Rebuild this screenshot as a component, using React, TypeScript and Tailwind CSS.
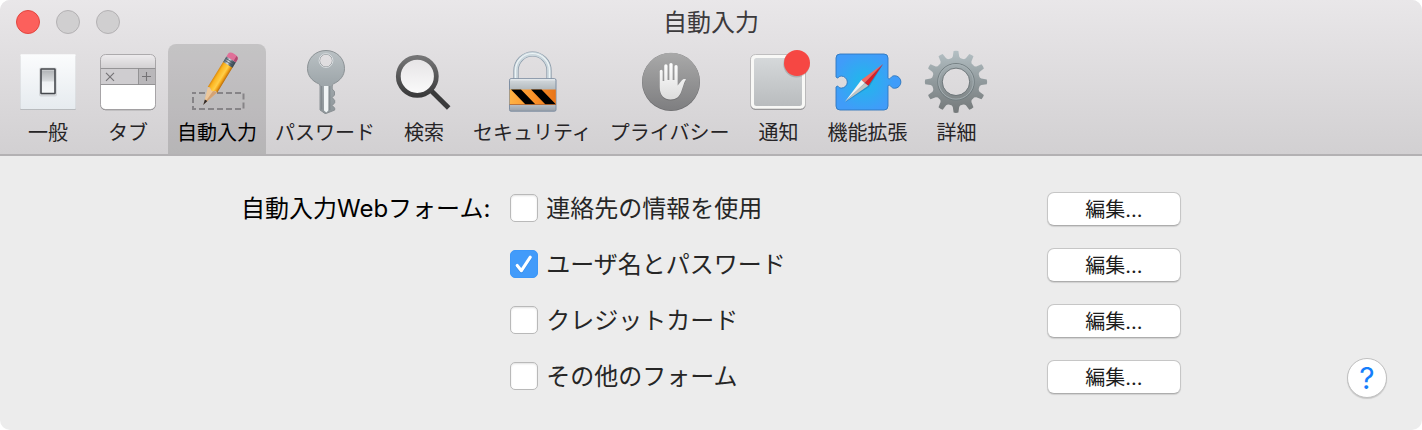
import { useState, type ReactNode } from "react";

const iconClass = "-mx-px size-16 overflow-visible";

function GeneralIcon() {
  return (
    <svg viewBox="0 0 64 64" className={iconClass} aria-hidden="true">
      <defs>
        <linearGradient id="gen-plate" x2="0" y2="1">
          <stop offset="0" stopColor="#fbfcfd" />
          <stop offset="1" stopColor="#e6ebef" />
        </linearGradient>
        <linearGradient id="gen-switch" x2="0" y2="1">
          <stop offset="0" stopColor="#e2e4e6" />
          <stop offset=".1" stopColor="#b5b8bb" />
          <stop offset=".5" stopColor="#d9dcde" />
          <stop offset=".52" stopColor="#eef1f3" />
          <stop offset="1" stopColor="#f6f8f9" />
        </linearGradient>
      </defs>
      <rect x="4.300" y="5" width="55.400" height="55" rx="1" fill="#a9abae" />
      <rect x="4.300" y="4.300" width="55.400" height="55" rx="1" fill="url(#gen-plate)" />
      <rect x="23" y="17.500" width="18" height="29" rx="2" fill="#000" opacity=".1" />
      <rect x="25" y="19" width="14" height="24.500" rx=".5" fill="url(#gen-switch)" stroke="#46494e" strokeWidth="1.600" />
    </svg>
  );
}

function TabsIcon() {
  return (
    <svg viewBox="0 0 64 64" className={iconClass} aria-hidden="true">
      <defs>
        <linearGradient id="tab-top" x2="0" y2="1">
          <stop offset="0" stopColor="#efedef" />
          <stop offset="1" stopColor="#d3d1d3" />
        </linearGradient>
        <clipPath id="tab-clip">
          <rect x="4.500" y="4.500" width="55" height="55" rx="5" />
        </clipPath>
      </defs>
      <rect x="4.500" y="5" width="55" height="55.300" rx="5" fill="#7d7b7e" />
      <g clipPath="url(#tab-clip)">
        <rect x="4" y="4" width="56" height="56" fill="#fff" />
        <rect x="4" y="4" width="56" height="14" fill="url(#tab-top)" />
        <rect x="4" y="18" width="56" height="17" fill="#cfcdd0" />
        <rect x="42" y="18" width="18" height="17" fill="#b9b7ba" />
        <path d="M4 18.500h56M4 34.500h56M42.500 18v17" stroke="#8f8d90" strokeWidth=".9" fill="none" />
      </g>
      <rect x="4.500" y="4.500" width="55" height="55" rx="5" fill="none" stroke="#9a989b" strokeWidth=".8" />
      <path d="M10 22.800l8 8M18 22.800l-8 8M46 26.500h9M50.500 22v9" stroke="#747275" strokeWidth="1.100" fill="none" />
    </svg>
  );
}

function PencilIcon() {
  return (
    <svg viewBox="0 0 64 64" className={iconClass} aria-hidden="true">
      <defs>
        <linearGradient id="pen-body">
          <stop offset="0" stopColor="#d9880f" />
          <stop offset=".2" stopColor="#fbb521" />
          <stop offset=".6" stopColor="#ffcf4a" />
          <stop offset=".78" stopColor="#f5a81b" />
          <stop offset="1" stopColor="#b96a08" />
        </linearGradient>
        <linearGradient id="pen-metal">
          <stop offset="0" stopColor="#4b5b67" />
          <stop offset=".4" stopColor="#d5dde2" />
          <stop offset=".65" stopColor="#5e6e7a" />
          <stop offset="1" stopColor="#36444e" />
        </linearGradient>
      </defs>
      <rect x="8" y="43" width="50.500" height="16" fill="none" stroke="#868487" strokeWidth="2" strokeDasharray="6 3" strokeDashoffset="3" />
      <g transform="translate(18.500 54.500) rotate(31.500) scale(1.150 1)">
        <path d="M-4.600-17L0 0l4.600-17z" fill="#ecc79b" />
        <path d="M1-17L0 0l4.600-17z" fill="#d3a274" />
        <path d="M-1.300-5L0 0.500l1.300-5.500z" fill="#2f2a2b" />
        <path d="M-4.800-47h9.600v30q-1.600-2-3 0-1.700 2.200-3.500 0-1.600-2-3.100 0z" fill="url(#pen-body)" />
        <path d="M-4.800-53h9.600v6.500h-9.600z" fill="url(#pen-metal)" />
        <path d="M-4.800-51h9.600M-4.800-48.700h9.600" stroke="#3c4a55" strokeWidth=".6" />
        <path d="M-4.800-53v-3q0-3.200 4.800-3.200t4.800 3.200v3z" fill="#df7098" />
        <path d="M2.500-53v-5.600q2.300.5 2.300 2.600v3z" fill="#b04a70" />
      </g>
    </svg>
  );
}

function KeyIcon() {
  return (
    <svg viewBox="0 0 64 64" className={iconClass} aria-hidden="true">
      <defs>
        <linearGradient id="key-head" x2="0" y2="1">
          <stop offset="0" stopColor="#bac1c4" />
          <stop offset=".5" stopColor="#a0a8ac" />
          <stop offset="1" stopColor="#8f969a" />
        </linearGradient>
      </defs>
      <path
        fillRule="evenodd"
        d="M33 .5c10.800 0 18.500 8 18.500 18 0 7-4.300 12.300-11 15.300q-1.300.7-1.300 2.200V39l2.300 2.500v3.500l-2.300 2.500 2.500 3v2.300l-2.500 2.700 2.500 2.600v2l-8.700 3.400h-1L27 60V36q0-1.500-1.300-2.200C18.800 30.800 14.500 25.500 14.500 18.500c0-10 7.700-18 18.500-18zm0 3.700a6.400 6.400 0 100 12.800 6.400 6.400 0 000-12.800z"
        fill="url(#key-head)"
        stroke="#848b8f"
        strokeWidth=".9"
      />
      <path d="M28.700 36v23.500M36.800 36v24" stroke="#7e868a" strokeWidth="1" />
      <path d="M31 36h4.300v24.500l-2 2-2.300-2z" fill="#f0f4f5" />
      <circle cx="33" cy="10.600" r="6.900" fill="none" stroke="#e7ebed" strokeWidth=".8" />
    </svg>
  );
}

function SearchIcon() {
  return (
    <svg viewBox="0 0 64 64" className={iconClass} aria-hidden="true">
      <defs>
        <linearGradient id="lens" x2="0" y2="1">
          <stop offset="0" stopColor="#e6e4e6" />
          <stop offset="1" stopColor="#fafafa" />
        </linearGradient>
        <linearGradient id="rim" x2="0" y2="1">
          <stop offset="0" stopColor="#747475" />
          <stop offset="1" stopColor="#3a3a3b" />
        </linearGradient>
      </defs>
      <path d="M38.500 40L56.700 58" stroke="#3a3a3b" strokeWidth="5" />
      <circle cx="25.300" cy="26.300" r="17" fill="url(#lens)" />
      <circle cx="25.300" cy="26.300" r="19" fill="none" stroke="url(#rim)" strokeWidth="4.800" />
    </svg>
  );
}

function LockIcon() {
  return (
    <svg viewBox="0 0 64 64" className={iconClass} aria-hidden="true">
      <defs>
        <linearGradient id="lock-body" x2="0" y2="1">
          <stop offset="0" stopColor="#d5dbdf" />
          <stop offset=".33" stopColor="#b3babe" />
          <stop offset=".8" stopColor="#b9bfc5" />
          <stop offset="1" stopColor="#989fa8" />
        </linearGradient>
        <linearGradient id="lock-band">
          <stop offset="0" stopColor="#ffb244" />
          <stop offset=".5" stopColor="#fc932a" />
          <stop offset="1" stopColor="#e8751a" />
        </linearGradient>
      </defs>
      <path d="M16 30V20.500a16.500 16.500 0 0133 0V30" fill="none" stroke="#8797a6" strokeWidth="5.200" />
      <path d="M16 30V20.500a16.500 16.500 0 0133 0V30" fill="none" stroke="#ccd8de" strokeWidth="3.800" />
      <path d="M15.500 28V20.500a17 17 0 0134 0V28" fill="none" stroke="#edf4f6" strokeWidth="1.200" />
      <rect x="9.500" y="28.700" width="46.500" height="32.500" rx="1.500" fill="url(#lock-body)" stroke="#7f8fa3" />
      <path d="M10.500 29.800h44.500" stroke="#eef2f4" />
      <rect x="9.700" y="39.500" width="46.100" height="15" fill="url(#lock-band)" />
      <path d="M11 39.500h10l14.500 15h-10zM31 39.500h10.500l14.300 14.700v.3H45.500z" fill="#000" />
      <path d="M9.700 54.500h46.100" stroke="#b3622a" strokeWidth=".8" />
    </svg>
  );
}

const handPath =
  "M21.700 37V21.300a1.500 1.500 0 013 0V31h1.500V15.900a1.700 1.700 0 013.400 0V30h1.700V14.600a1.700 1.700 0 013.400 0V30h1.700V16.700a1.600 1.600 0 013.300 0V35.500l4-5c1-1.500 3-2 4.500-1-1.200 1.300-1.900 3-2.700 5.500l-2.200 6.500c-1.700 5-5 8-10.700 8-6.300 0-10.900-4-10.900-12.500z";

function PrivacyIcon() {
  return (
    <svg viewBox="0 0 64 64" className={iconClass} aria-hidden="true">
      <defs>
        <linearGradient id="disc" x2="0" y2="1">
          <stop offset="0" stopColor="#a9a9a9" />
          <stop offset="1" stopColor="#7e7e80" />
        </linearGradient>
        <linearGradient id="hand" x2="0" y2="1">
          <stop offset="0" stopColor="#fff" />
          <stop offset="1" stopColor="#dcdcdc" />
        </linearGradient>
      </defs>
      <circle cx="33" cy="31.900" r="29" fill="#6d6d6f" />
      <circle cx="33" cy="31.500" r="28.700" fill="url(#disc)" />
      <path d={handPath} fill="#5d5d5f" opacity=".5" transform="translate(0 1)" />
      <path d={handPath} fill="url(#hand)" />
    </svg>
  );
}

function NotificationIcon() {
  return (
    <svg viewBox="0 0 64 64" className={iconClass} aria-hidden="true">
      <defs>
        <linearGradient id="note" x2="0" y2="1">
          <stop offset="0" stopColor="#d5d8da" />
          <stop offset="1" stopColor="#b9bcbe" />
        </linearGradient>
      </defs>
      <rect x="4.500" y="5" width="55" height="55" rx="5" fill="#858587" />
      <rect x="4.500" y="4.500" width="55" height="54.500" rx="5" fill="#f8f8f6" stroke="#b4b3b4" strokeWidth=".8" />
      <rect x="8" y="8" width="48" height="48" rx="2.500" fill="url(#note)" />
      <circle cx="50.500" cy="14.200" r="13.200" fill="#000" opacity=".15" />
      <circle cx="51" cy="13" r="13" fill="#f64743" />
    </svg>
  );
}

function ExtensionsIcon() {
  return (
    <svg viewBox="0 0 64 64" className={iconClass} aria-hidden="true">
      <defs>
        <radialGradient id="puzzle" gradientUnits="userSpaceOnUse" cx="29" cy="32" r="30">
          <stop offset="0" stopColor="#1fb9ea" />
          <stop offset="1" stopColor="#409cf9" />
        </radialGradient>
      </defs>
      <path
        d="M5 4h44a4 4 0 014 4v20.200c1 1.200 2.200.6 3-.7 1-1.200 2.200-1.800 3.600-1.800a6.300 6.300 0 010 12.600c-1.500 0-2.700-.6-3.600-1.800-.8-1.300-2-1.800-3-.7V56a4 4 0 01-4 4H5a4 4 0 01-4-4V37c1.300-1.300 2-1.100 2.800.2.600.6 1.500.9 2.500.9a6 6 0 000-12c-1 0-1.900.3-2.500.9C3 28.300 2.300 28.300 1 27V8a4 4 0 014-4z"
        fill="url(#puzzle)"
        stroke="#3077bd"
        strokeWidth=".9"
      />
      <path d="M48 14.500L34 37 10 52.500 26.500 31z" fill="#14598d" opacity=".35" />
      <path d="M48 14L26.300 30l3.400 3z" fill="#f4685e" />
      <path d="M48 14L33.300 35.700l-3.600-2.700z" fill="#d91f26" />
      <path d="M10 51.700L26.300 30l3.400 3z" fill="#f3f3f1" />
      <path d="M10 51.700l23.300-16-3.600-2.700z" fill="#c2c4c2" />
    </svg>
  );
}

const gearTeeth = [0, 30, 60, 90, 120, 150, 180, 210, 240, 270, 300, 330];

function AdvancedIcon() {
  return (
    <svg viewBox="0 0 64 64" className={iconClass} aria-hidden="true">
      <defs>
        <linearGradient id="gear" gradientUnits="userSpaceOnUse" x1="0" y1="1" x2="0" y2="63">
          <stop offset="0" stopColor="#b4c0c4" />
          <stop offset=".5" stopColor="#90999c" />
          <stop offset="1" stopColor="#747879" />
        </linearGradient>
        <mask id="gear-mask">
          <rect x="-2" y="-2" width="68" height="68" fill="#000" />
          <circle cx="32" cy="31.800" r="24" fill="#fff" />
          {gearTeeth.map((a) => (
            <path key={a} d="M26.500 10l2.300-3.500.8-5.500q2.400-.7 4.800 0l.8 5.500 2.300 3.500z" fill="#fff" transform={`rotate(${a} 32 31.800)`} />
          ))}
          <circle cx="32" cy="31.800" r="13.500" fill="#000" />
        </mask>
      </defs>
      <g mask="url(#gear-mask)">
        <rect width="64" height="64" fill="url(#gear)" />
      </g>
      <circle cx="32" cy="31.800" r="18.300" fill="none" stroke="#6f7a7e" strokeWidth=".9" />
      <circle cx="32" cy="31.800" r="17.300" fill="none" stroke="#aab4b7" strokeWidth=".8" />
      <circle cx="32" cy="31.800" r="13.700" fill="none" stroke="#687174" strokeWidth=".9" />
    </svg>
  );
}

const panes: { label: string; icon: ReactNode }[] = [
  { label: "一般", icon: <GeneralIcon /> },
  { label: "タブ", icon: <TabsIcon /> },
  { label: "自動入力", icon: <PencilIcon /> },
  { label: "パスワード", icon: <KeyIcon /> },
  { label: "検索", icon: <SearchIcon /> },
  { label: "セキュリティ", icon: <LockIcon /> },
  { label: "プライバシー", icon: <PrivacyIcon /> },
  { label: "通知", icon: <NotificationIcon /> },
  { label: "機能拡張", icon: <ExtensionsIcon /> },
  { label: "詳細", icon: <AdvancedIcon /> },
];

const options = [
  { id: "contacts", label: "連絡先の情報を使用", checked: false },
  { id: "passwords", label: "ユーザ名とパスワード", checked: true },
  { id: "cards", label: "クレジットカード", checked: false },
  { id: "other", label: "その他のフォーム", checked: false },
];

function OptionRow({ id, label, checked }: { id: string; label: string; checked: boolean }) {
  return (
    <div className="flex h-14 items-center justify-between">
      <div className="flex items-center gap-2">
        <span className="grid size-7 place-items-center *:col-start-1 *:row-start-1">
          <input
            id={id}
            type="checkbox"
            defaultChecked={checked}
            className="peer size-7 appearance-none rounded-[5px] border border-[#b9b9b9] bg-white shadow-[inset_0_1px_2px_rgba(0,0,0,0.12)] checked:border-[#3d97f8] checked:bg-[#429bfa] checked:shadow-none"
          />
          <svg viewBox="0 0 28 28" className="pointer-events-none invisible size-7 peer-checked:visible" aria-hidden="true">
            <path d="M7.200 15.500l4.200 5.200L20.300 7.200" fill="none" stroke="#1f6fc8" strokeOpacity=".4" strokeWidth="3.100" strokeLinecap="round" strokeLinejoin="round" transform="translate(0 1)" />
            <path d="M7.200 15.500l4.200 5.200L20.300 7.200" fill="none" stroke="#fff" strokeWidth="3.100" strokeLinecap="round" strokeLinejoin="round" />
          </svg>
        </span>
        <label htmlFor={id} className="pt-0.5 text-2xl text-[#262626]">
          {label}
        </label>
      </div>
      <button
        type="button"
        aria-label={`${label} 編集...`}
        className="mt-0.5 flex h-[34px] w-[134px] items-center justify-center rounded-[7px] border border-[#c6c6c6] border-b-[#adadad] bg-white pt-0.5 text-xl text-[#1c1c1c] shadow-[0_1px_1px_rgba(0,0,0,0.12)]"
      >
        編集...
      </button>
    </div>
  );
}

export default function App() {
  const [active, setActive] = useState("自動入力");

  return (
    <div className="min-h-screen bg-white">
      <div
        lang="ja"
        className="flex min-h-screen flex-col overflow-hidden rounded-[10px] bg-[#ececec] font-['Inter','Noto_Sans_CJK_JP',sans-serif]"
      >
        <header className="border-b-2 border-[#b3b1b3] bg-linear-to-b from-[#e9e7e9] to-[#d2d0d2]">
          <div className="grid h-11 grid-cols-[1fr_auto_1fr] items-center px-4">
            <div className="flex gap-4">
              <button type="button" aria-label="閉じる" className="size-6 rounded-full border border-[#e2463f] bg-[#fc605c]" />
              <button type="button" aria-label="しまう" className="size-6 rounded-full border border-[#b3b1b3] bg-[#d0cfd0]" />
              <button type="button" aria-label="拡大" className="size-6 rounded-full border border-[#b3b1b3] bg-[#d0cfd0]" />
            </div>
            <h1 className="pt-0.5 text-2xl text-[#3c3a3c]">自動入力</h1>
          </div>
          <nav className="flex pl-2">
            {panes.map((pane) => (
              <button
                key={pane.label}
                type="button"
                aria-pressed={pane.label === active}
                onClick={() => setActive(pane.label)}
                className="flex min-w-20 flex-col items-center rounded-t-lg px-[9px] pt-1.5 pb-0.5 text-[#262426] aria-pressed:bg-black/13 aria-pressed:text-black"
              >
                {pane.icon}
                <span className="text-xl leading-[38px] whitespace-nowrap">{pane.label}</span>
              </button>
            ))}
          </nav>
        </header>

        <main className="grid grid-cols-[1fr_minmax(0,940px)_1fr] pt-6 pb-6">
          <div role="group" aria-labelledby="forms-title" className="col-start-2 flex gap-5">
            <h2 id="forms-title" className="pt-px text-2xl leading-14 whitespace-nowrap text-black">
              自動入力Webフォーム:
            </h2>
            <div className="flex-1">
              {options.map((option) => (
                <OptionRow key={option.id} {...option} />
              ))}
            </div>
          </div>
          <button
            type="button"
            aria-label="ヘルプ"
            className="mr-[35px] mb-1.5 flex size-10 items-center justify-center self-end justify-self-end rounded-full border border-[#c0c0c0] bg-white text-3xl text-[#157efb] shadow-[0_1px_1px_rgba(0,0,0,0.15)]"
          >
            ?
          </button>
        </main>
      </div>
    </div>
  );
}
